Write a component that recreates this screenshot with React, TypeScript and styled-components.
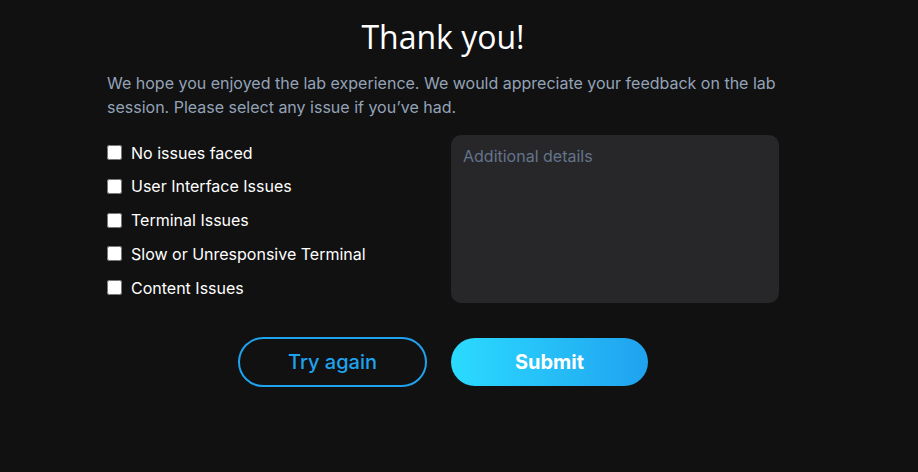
import React, { useState } from "react";
import styled, { createGlobalStyle } from "styled-components";

const GlobalStyle = createGlobalStyle`
  html, body {
    margin: 0;
    padding: 0;
    background: #111111;
  }
  body {
    font-family: Inter, "Liberation Sans", sans-serif;
    color: #ffffff;
  }
`;

const Page = styled.div`
  width: 886px;
  min-height: 472px;
  display: flex;
  justify-content: center;
`;

const Card = styled.div`
  width: 672px;
  display: flex;
  flex-direction: column;
  padding-top: 16px;
`;

const Title = styled.h1`
  margin: 0;
  text-align: center;
  font-family: "Open Sans", "Liberation Sans", sans-serif;
  font-size: 32px;
  font-weight: 400;
  line-height: 42px;
  color: #ffffff;
`;

const Intro = styled.p`
  margin: 13px 0 0;
  font-size: 16px;
  line-height: 24px;
  color: #94a3b8;
`;

const FormGrid = styled.div`
  margin-top: 16px;
  display: grid;
  grid-template-columns: 344px 328px;
`;

const IssueList = styled.div`
  display: flex;
  flex-direction: column;
  gap: 10.75px;
  padding-top: 6px;
`;

const IssueRow = styled.label`
  display: flex;
  align-items: center;
  gap: 9px;
  height: 23px;
  font-size: 16px;
  color: #ffffff;
  cursor: pointer;
`;

const Box = styled.input`
  width: 15px;
  height: 15px;
  margin: 0;
  accent-color: #22a3f0;
`;

const Details = styled.textarea`
  width: 328px;
  height: 168px;
  box-sizing: border-box;
  padding: 10px 12px;
  border: none;
  border-radius: 10px;
  background: #27272a;
  color: #ffffff;
  font-family: Inter, "Liberation Sans", sans-serif;
  font-size: 16px;
  line-height: 22px;
  resize: none;
  outline: none;

  &::placeholder {
    color: #64748b;
  }
`;

const Actions = styled.div`
  margin-top: 34px;
  display: flex;
  justify-content: center;
  align-items: center;
  gap: 24px;
`;

const OutlineButton = styled.button`
  width: 189px;
  height: 50px;
  box-sizing: border-box;
  border: 2px solid #1fa3ee;
  border-radius: 25px;
  background: transparent;
  color: #1fa3ee;
  font-family: Inter, "Liberation Sans", sans-serif;
  font-size: 20px;
  font-weight: 500;
  cursor: pointer;
`;

const PrimaryButton = styled.button`
  width: 197px;
  height: 48px;
  border: none;
  border-radius: 24px;
  background: linear-gradient(90deg, #2bdbff 0%, #20a2ef 100%);
  color: #ffffff;
  font-family: Inter, "Liberation Sans", sans-serif;
  font-size: 20px;
  font-weight: 700;
  cursor: pointer;
`;

const issues = [
  "No issues faced",
  "User Interface Issues",
  "Terminal Issues",
  "Slow or Unresponsive Terminal",
  "Content Issues",
];

const App = () => {
  const [checked, setChecked] = useState<string[]>([]);
  const [details, setDetails] = useState("");

  const toggle = (issue: string) =>
    setChecked((prev) =>
      prev.includes(issue) ? prev.filter((i) => i !== issue) : [...prev, issue]
    );

  return (
    <>
      <GlobalStyle />
      <Page>
        <Card>
          <Title>Thank you!</Title>
          <Intro>
            We hope you enjoyed the lab experience. We would appreciate your
            feedback on the lab session. Please select any issue if you’ve had.
          </Intro>
          <FormGrid>
            <IssueList>
              {issues.map((issue) => (
                <IssueRow key={issue}>
                  <Box
                    type="checkbox"
                    checked={checked.includes(issue)}
                    onChange={() => toggle(issue)}
                  />
                  {issue}
                </IssueRow>
              ))}
            </IssueList>
            <Details
              placeholder="Additional details"
              value={details}
              onChange={(e) => setDetails(e.target.value)}
            />
          </FormGrid>
          <Actions>
            <OutlineButton>Try again</OutlineButton>
            <PrimaryButton>Submit</PrimaryButton>
          </Actions>
        </Card>
      </Page>
    </>
  );
};

export default App;
